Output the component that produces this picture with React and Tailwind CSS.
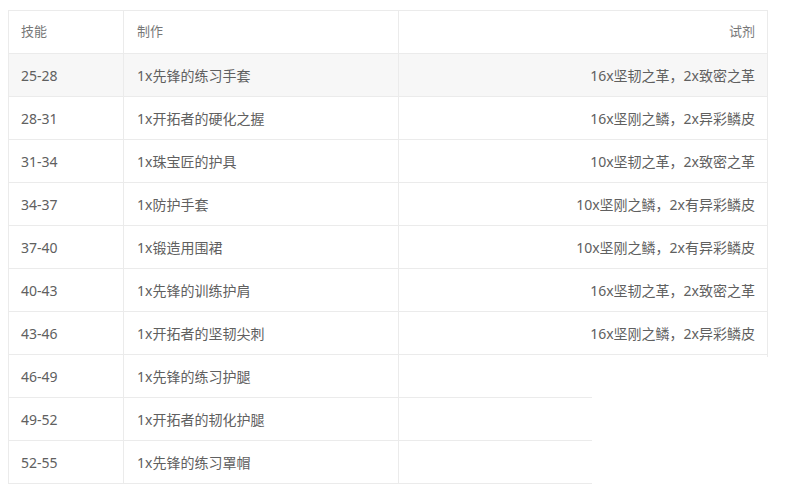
const rows = [
  ['25-28', '1x先锋的练习手套', '16x坚韧之革，2x致密之革'],
  ['28-31', '1x开拓者的硬化之握', '16x坚刚之鳞，2x异彩鳞皮'],
  ['31-34', '1x珠宝匠的护具', '10x坚韧之革，2x致密之革'],
  ['34-37', '1x防护手套', '10x坚刚之鳞，2x有异彩鳞皮'],
  ['37-40', '1x锻造用围裙', '10x坚刚之鳞，2x有异彩鳞皮'],
  ['40-43', '1x先锋的训练护肩', '16x坚韧之革，2x致密之革'],
  ['43-46', '1x开拓者的坚韧尖刺', '16x坚刚之鳞，2x异彩鳞皮'],
  ['46-49', '1x先锋的练习护腿', ''],
  ['49-52', '1x开拓者的韧化护腿', ''],
  ['52-55', '1x先锋的练习罩帽', ''],
]

function Row({ cells, header, shaded }) {
  return (
    <div
      className={`grid grid-cols-[115px_275px_368px] h-[43px] border-b border-[#ebebeb] ${
        shaded ? 'bg-[#f7f7f7]' : 'bg-white'
      } ${header ? 'text-[13px] text-[#777]' : 'text-[14px] text-[#606060]'}`}
    >
      <div className="flex items-center pl-3 border-r border-[#ebebeb]">{cells[0]}</div>
      <div className="flex items-center pl-[13px] border-r border-[#ebebeb]">{cells[1]}</div>
      <div className="flex items-center justify-end pr-3">{cells[2]}</div>
    </div>
  )
}

export default function App() {
  return (
    <div
      className="relative w-[789px] h-[488px] bg-white overflow-hidden pt-[10px] pl-2"
      style={{ fontFamily: '"Noto Sans", "Noto Sans CJK SC", sans-serif' }}
    >
      <div className="w-[760px] border border-b-0 border-[#ebebeb]">
        <Row header cells={['技能', '制作', '试剂']} />
        {rows.map((r, i) => (
          <Row key={r[0]} cells={r} shaded={i === 0} />
        ))}
      </div>

      {/* cropped-off corner of the screenshot */}
      <div className="absolute left-[592px] top-[357px] right-0 bottom-0 bg-white" />
    </div>
  )
}
